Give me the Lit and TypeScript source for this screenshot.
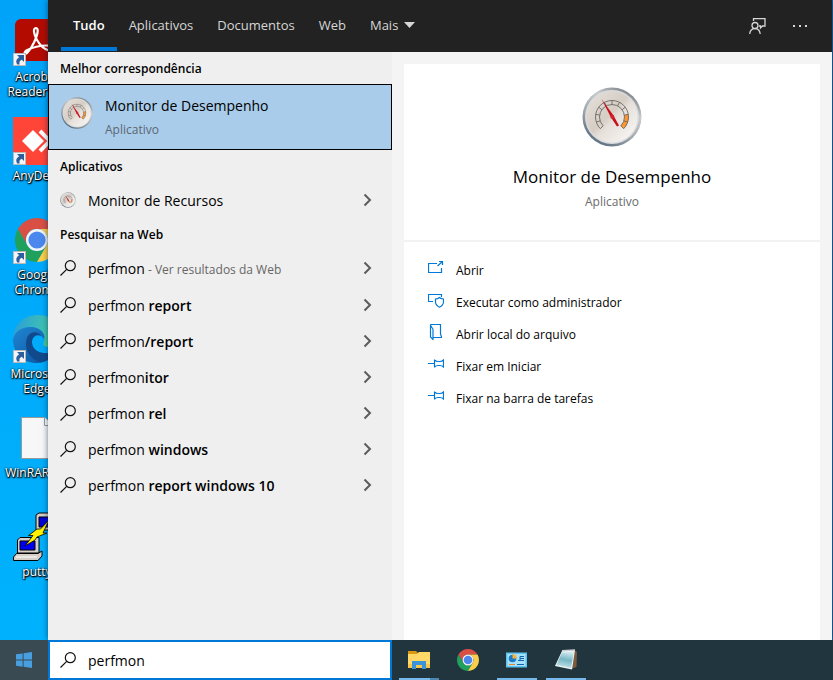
import { LitElement, html, svg, css, nothing, TemplateResult } from "lit";
import { customElement, property, state } from "lit/decorators.js";
import { classMap } from "lit/directives/class-map.js";

const chromeShapes = svg`
  <path fill="#d94f43" d="M24 13H43.05A22 22 0 0 0 4.95 13L14.47 29.5A11 11 0 0 1 24 13Z"/>
  <path fill="#1fa15d" d="M14.47 29.5L4.95 13A22 22 0 0 0 24 46L33.53 29.5A11 11 0 0 1 14.47 29.5Z"/>
  <path fill="#fbce4a" d="M33.53 29.5L24 46A22 22 0 0 0 43.05 13H24A11 11 0 0 1 33.53 29.5Z"/>
  <circle cx="24" cy="24" r="11" fill="#f4f4f4"/>
  <circle cx="24" cy="24" r="8.6" fill="#4a88ee"/>`;

const shortcutArrow = svg`
  <rect x="0.5" y="36.5" width="12" height="12" fill="#f4f4f4" stroke="#b9b9b9"/>
  <path fill="#2c5f9e" d="M4 38H11V45L8.8 42.8C6.8 43.6 6 45 6.6 47.4H4.2C2.4 44.4 3.4 41.8 6.2 40.2Z"/>`;

const desktopArt: Record<string, TemplateResult> = {
  acrobat: svg`
    <rect x="2" y="2" width="44" height="42" rx="6" fill="#b30b00"/>
    <path fill="none" stroke="#fff" stroke-width="2.2" d="M23 11C19.500 11 21 18 24 23C27.500 29 33 33.500 38 33.500C42 33.500 41.500 29 36 28.600C28 28 18 30.500 13.500 33.500C10 36 12 38 14.500 35.500C19 31 24 20 24.600 15C24.900 12.500 24.400 11 23 11Z"/>`,
  anydesk: svg`
    <rect width="48" height="48" y="1" fill="#ff4438"/>
    <path fill="#fff" d="M9 25L20 14L31 25L20 36Z"/>
    <path fill="none" stroke="#fff" stroke-width="4" d="M27 15L37 25L27 35"/>`,
  chrome: svg`<g transform="translate(0 1)">${chromeShapes}</g>`,
  edge: svg`
    <defs>
      <linearGradient id="edge-top" x1="0" x2="1" y1="0.300" y2="0.500">
        <stop offset="0" stop-color="#2a9fd8"/><stop offset="0.700" stop-color="#3fc4b0"/><stop offset="1" stop-color="#5ed66a"/>
      </linearGradient>
      <linearGradient id="edge-low" x1="0" x2="1" y1="0" y2="1">
        <stop offset="0" stop-color="#1f86d2"/><stop offset="1" stop-color="#0c4f9c"/>
      </linearGradient>
    </defs>
    <path fill="url(#edge-top)" d="M0 25C1 9 12 1 25 1C39 1 48 11 48 22C48 29 43 33 37 33C31 33 29 31 31 27C33 20 27 13 18 13C9 13 2 18 0 25Z"/>
    <path fill="url(#edge-low)" d="M0 25C2 17 9 13 18 13C27 13 33 20 31 25C29 20 20 20 19 27C18 36 28 42 42 38C38 45 31 49 24 49C10 49 0 39 0 25Z"/>
    <path fill="#114a8c" d="M14 24C10 36 18 46 28 48.500C36 47 40 43 42 38C28 42 18 36 19 27C20 21 25 20 28 21.500C24 16 16 18 14 24Z"/>`,
  file: svg`
    <path fill="#f7f7f7" stroke="#9a9a9a" d="M8.500 4.500H32L41 13.500V45.500H8.500Z"/>
    <path fill="#fff" stroke="#9a9a9a" d="M31.500 4.500V12.500H40"/>`,
  putty: svg`
    <g stroke="#000">
      <path fill="#d4d0c8" d="M23 3L26 1H48V18H23Z"/>
      <path fill="#0000d8" d="M26 5H46V15H26Z"/>
      <path fill="#d4d0c8" d="M4.500 28L7 25.500H26V41H4.500Z"/>
      <path fill="#0000f0" d="M7 29H22V38H7Z"/>
      <path fill="#d4d0c8" d="M0.500 45L3.500 41.500H25L29 39V44L25 48.500H0.500Z"/>
      <path fill="#fff200" stroke-width="0.800" d="M12 34L20 23.500H15.500L24 17L27.500 17L36 8L30 21H34L24 25L22 28Z"/>
    </g>
    <path stroke="#fff" d="M3 45H24"/>`,
};

const windowsLogo = svg`
  <path fill="#479fe0" d="M0 2.300L6.600 1.400V7.600H0ZM7.600 1.250L16 0V7.600H7.600ZM0 8.500H6.600V14.700L0 13.800ZM7.600 8.500H16V16L7.600 14.850Z"/>`;

const taskArt: Record<string, TemplateResult> = {
  explorer: svg`
    <path fill="#d99a12" d="M1 3H9L11 5V8H1Z"/>
    <path fill="#ffd867" d="M1 6H10L12 4H23V20H1Z"/>
    <path fill="#f9c84a" d="M1 16H23V20H1Z"/>
    <path fill="#3b94d8" d="M5 13H19V21H15V17H9V21H5Z"/>`,
  chrome: svg`<g transform="scale(0.5)">${chromeShapes}</g>`,
  monitor: svg`
    <rect x="1" y="4.500" width="21" height="15" fill="#5cc4f2"/>
    <rect x="2.500" y="6" width="18" height="12" fill="#a8e2fa"/>
    <circle cx="7.500" cy="10.500" r="3.800" fill="#1b7cc8"/>
    <path fill="#f7b23a" d="M7.500 10.500V6A4.500 4.500 0 0 1 12 10.500Z"/>
    <path fill="none" stroke="#1462a8" d="M13 12.500H15V8.500H19M15 10.500H19M15 12.500H19M12 16.500H19"/>
    <path stroke="#e8862a" d="M4 16.500H10"/>`,
  notes: svg`
    <defs>
      <linearGradient id="page" x1="0.600" x2="0.400" y1="0" y2="1">
        <stop offset="0" stop-color="#d5ecef"/><stop offset="0.500" stop-color="#77b6c6"/><stop offset="1" stop-color="#c4e6ea"/>
      </linearGradient>
    </defs>
    <path fill="#7a5b3c" d="M20.500 2L23 4L22.500 19L17 21Z"/>
    <path fill="#f0f4f4" d="M8 3L21 2L18 21.500L1 18Z"/>
    <path fill="url(#page)" d="M8 4.500L20 3.500L17 20L2.500 17Z"/>
    <path fill="none" stroke="#c9cfd0" stroke-width="1.500" d="M8 2.800L21 2"/>`,
};

const actionArt: Record<string, TemplateResult> = {
  open: svg`<path d="M9 3.500H0.500V12.500H13.500V8M9.500 6L14.500 1.500M11 1.500H14.500V5"/>`,
  admin: svg`<path d="M5 9.500H0.500V2.500H13.500V5M11.500 5.500C10.300 6.500 9 7 7.500 7V10C7.500 12.500 9 14 11.500 15.200C14 14 15.500 12.500 15.500 10V7C14 7 12.700 6.500 11.500 5.500Z"/>`,
  folder: svg`<path d="M2.500 0.500H12.500V9.500C12.500 11 13.500 11.500 13.500 13.500H5M2.500 0.500V13L5 15.500V5.500C5 3.500 2.500 3.500 2.500 0.500Z"/>`,
  pin: svg`<path d="M0 7.500H6M6.500 3.500V11.500M6.500 4C7.500 5 8 5.500 10 5.500H12C13.500 5.500 14.500 5 15.500 4V11C14.500 10 13.500 9.500 12 9.500H10C8 9.500 7.500 10 6.500 11"/>`,
};

/* Dial scale: a band from 135 to 405 degrees, split into ten segments. */
const at = (radius: number, degrees: number) => {
  const angle = (degrees * Math.PI) / 180;
  return `${(30 + radius * Math.cos(angle)).toFixed(2)} ${(30 + radius * Math.sin(angle)).toFixed(2)}`;
};
const band = (from: number, to: number) => {
  const large = to - from > 180 ? 1 : 0;
  return `M${at(16.5, from)}A16.5 16.5 0 ${large} 1 ${at(16.5, to)}L${at(12.5, to)}A12.5 12.5 0 ${large} 0 ${at(12.5, from)}Z`;
};
const ticks = Array.from({ length: 9 }, (_, i) => `M${at(12.5, 162 + i * 27)}L${at(16.5, 162 + i * 27)}`).join("");

@customElement("perf-gauge")
class PerfGauge extends LitElement {
  static styles = css`
    :host { display: block; flex: none; }
    svg { display: block; width: 100%; height: 100%; }
  `;
  render() {
    return html`<svg viewBox="0 0 60 60" aria-hidden="true">
      <defs>
        <linearGradient id="rim" x1="0.800" x2="0.200" y1="0" y2="1">
          <stop offset="0" stop-color="#6f7478"/><stop offset="0.300" stop-color="#c9cbcc"/>
          <stop offset="0.600" stop-color="#a5aaae"/><stop offset="1" stop-color="#4f6478"/>
        </linearGradient>
        <linearGradient id="dial" x1="0" x2="1" y1="0" y2="1">
          <stop offset="0" stop-color="#e6e1dc"/><stop offset="0.450" stop-color="#d6cdc4"/><stop offset="0.550" stop-color="#e6e0da"/><stop offset="1" stop-color="#fbfaf9"/>
        </linearGradient>
      </defs>
      <circle cx="30" cy="30" r="29.500" fill="url(#rim)"/>
      <circle cx="30" cy="30" r="27" fill="#d9dcde"/>
      <circle cx="30" cy="30" r="25.500" fill="url(#dial)"/>
      <path fill="#ff962e" d=${band(351, 405)}/>
      <path fill="none" stroke="#6a6764" stroke-width="0.900" d=${band(135, 405) + ticks}/>
      <path fill="#c8101c" d="M19.500 12L31.500 28.500L37 38.500L35 39.500L29 30.500Z"/>
      <circle cx="30.300" cy="29.700" r="2" fill="#d4222c"/>
    </svg>`;
  }
}

@customElement("desktop-icon")
class DesktopIcon extends LitElement {
  @property() art = "";
  @property() label = "";
  @property({ type: Boolean }) shortcut = false;
  static styles = css`
    :host { display: block; height: 99px; }
    a {
      display: flex; flex-direction: column; align-items: center; gap: 3px;
      color: #fff; text-decoration: none; text-align: center; white-space: pre-line;
      font: 12px/15px "Open Sans", "Noto Sans", sans-serif;
      text-shadow: 1px 1px 1px #000, 0 1px 2px #000, 0 0 2px #000;
    }
    svg { display: block; width: 48px; height: 49px; }
  `;
  render() {
    return html`<a href="#">
      <svg viewBox="0 0 48 49" aria-hidden="true">${desktopArt[this.art]}${this.shortcut ? shortcutArrow : nothing}</svg>
      <span>${this.label}</span>
    </a>`;
  }
}

interface Suggestion { typed: string; rest?: string; hint?: string; }

@customElement("app-root")
class AppRoot extends LitElement {
  @state() private tab = "Tudo";
  @state() private query = "perfmon";

  private tabs = ["Tudo", "Aplicativos", "Documentos", "Web"];
  private desktop = [
    { art: "acrobat", label: "Acrobat\nReader DC", shortcut: true },
    { art: "anydesk", label: "AnyDesk", shortcut: true },
    { art: "chrome", label: "Google\nChrome", shortcut: true },
    { art: "edge", label: "Microsoft\nEdge", shortcut: true },
    { art: "file", label: "WinRAR.rar", shortcut: false },
    { art: "putty", label: "putty", shortcut: false },
  ];
  private suggestions: Suggestion[] = [
    { typed: "perfmon", hint: " - Ver resultados da Web" },
    { typed: "perfmon ", rest: "report" },
    { typed: "perfmon", rest: "/report" },
    { typed: "perfmon", rest: "itor" },
    { typed: "perfmon ", rest: "rel" },
    { typed: "perfmon ", rest: "windows" },
    { typed: "perfmon ", rest: "report windows 10" },
  ];
  private actions = [
    { art: "open", label: "Abrir" },
    { art: "admin", label: "Executar como administrador" },
    { art: "folder", label: "Abrir local do arquivo" },
    { art: "pin", label: "Fixar em Iniciar" },
    { art: "pin", label: "Fixar na barra de tarefas" },
  ];
  private tasks = [
    { art: "explorer", label: "Explorador de Arquivos", open: true, stacked: true },
    { art: "chrome", label: "Google Chrome", open: false, stacked: false },
    { art: "monitor", label: "Painel de Controle", open: true, stacked: false },
    { art: "notes", label: "Bloco de Notas", open: true, stacked: false },
  ];

  static styles = css`
    * { box-sizing: border-box; }
    :host {
      display: grid; grid-template-rows: 1fr 40px; min-height: 100vh;
      font: 14px/20px "Open Sans", "Noto Sans", sans-serif; color: #000;
    }
    button { font: inherit; color: inherit; background: none; border: 0; padding: 0; text-align: left; }
    ul { list-style: none; margin: 0; padding: 0; }
    h2, h3, p { margin: 0; font-weight: 400; }
    svg { display: block; flex: none; }

    .screen {
      display: grid; grid-template-columns: 48px 1fr; padding-right: 1px;
      background: linear-gradient(90deg, #00a5f8, #1468a8);
    }
    .desktop { padding-top: 17px; overflow: hidden; background: linear-gradient(#00a3f8, #00b2fd); }
    .desktop-grid { width: 74px; }
    .flyout { display: grid; grid-template-rows: 52px 1fr; box-shadow: 0 0 6px rgba(0, 30, 60, 0.6); background: #f4f4f4; min-width: 0; }

    .tabs { display: flex; justify-content: space-between; background: #222; color: #d6d6d6; font-size: 13px; padding: 0 24px 0 13px; }
    .tab-set { display: flex; }
    .tab { padding: 3px 12px 0; border-bottom: 4px solid transparent; margin-bottom: 1px; }
    .tab.active { color: #fff; font-weight: 600; border-color: #0078d7; }
    .more { display: flex; align-items: center; gap: 6px; }
    .tools { display: flex; align-items: center; gap: 26px; }

    .body { display: grid; grid-template-columns: 344px minmax(0, 1fr); }
    .results { background: #efefef; }
    .group { font-size: 12px; line-height: 18px; font-weight: 600; padding: 8px 0 6px 12px; }
    .best {
      display: flex; align-items: center; gap: 12px; width: 100%; height: 66px; padding: 0 12px;
      background: #a9cceb; border: 1px solid #000;
    }
    .best perf-gauge { width: 32px; height: 32px; margin-bottom: 8px; }
    .best-text { display: grid; gap: 4px; padding-top: 2px; }
    .small { font-size: 12px; color: #5d6670; }
    .row { display: flex; align-items: center; gap: 12px; width: 100%; height: 36px; padding: 0 20px 0 12px; }
    .suggestions { display: grid; gap: 0; }
    .suggestions li:first-child { padding-bottom: 1px; }
    .row perf-gauge { width: 16px; height: 16px; }
    .label { flex: 1; white-space: pre; padding-top: 2px; }
    .label b { font-weight: 600; }
    .hint { font-size: 12px; color: #666; }
    .stroke { fill: none; stroke: #111; stroke-width: 1.200; }
    .chevron { fill: none; stroke: #5c5c5c; stroke-width: 2; }

    .preview { background: #fff; margin: 12px 12px 0; }
    .hero { display: flex; flex-direction: column; align-items: center; height: 178px; padding-top: 23px; border-bottom: 2px solid #f2f2f2; }
    .hero perf-gauge { width: 60px; height: 60px; }
    .title { font-size: 17px; line-height: 24px; margin-top: 18px; }
    .hero .small { margin-top: 3px; color: #6b6b6b; }
    .actions { padding: 12px 24px; }
    .action { display: flex; align-items: center; gap: 12px; width: 100%; height: 32px; font-size: 12px; }
    .action span { padding-top: 2px; }
    .action svg { fill: none; stroke: #0078d7; stroke-width: 1.200; margin-bottom: 4px; }

    .taskbar { display: flex; background: #21353f; }
    .start { width: 48px; display: grid; place-items: center; background: #394a53; }
    .search { display: flex; align-items: center; gap: 12px; width: 344px; padding: 0 10px; background: #fff; border: 2px solid #0078d7; }
    .search input { flex: 1; min-width: 0; border: 0; outline: 0; padding: 2px 0 0; font: inherit; background: none; }
    .apps { display: flex; gap: 9px; padding-left: 7px; }
    .app { width: 40px; display: grid; place-items: center; border-bottom: 2px solid transparent; border-top: 2px solid transparent; }
    .app.open { border-bottom-color: #76b9ed; }
    .app.stacked { border-image: linear-gradient(90deg, #76b9ed 78%, #4d86ae 78%) 0 0 2 0; }
  `;

  private magnifier() {
    return html`<svg class="stroke" width="16" height="16" viewBox="0 0 16 16" aria-hidden="true">
      <circle cx="10.300" cy="5.700" r="5"/><path d="M6.700 9.300L0.500 15.500"/></svg>`;
  }

  private chevron() {
    return html`<svg class="chevron" width="9" height="14" viewBox="0 0 9 14" aria-hidden="true"><path d="M1.500 1.500L7 7L1.500 12.500"/></svg>`;
  }

  render() {
    return html`
      <div class="screen">
        <div class="desktop"><div class="desktop-grid">
          ${this.desktop.map((d) => html`<desktop-icon art=${d.art} label=${d.label} ?shortcut=${d.shortcut}></desktop-icon>`)}
        </div></div>
        <main class="flyout">
          <nav class="tabs">
            <div class="tab-set">
              ${this.tabs.map((t) => html`<button class=${classMap({ tab: true, active: t === this.tab })} @click=${() => (this.tab = t)}>${t}</button>`)}
              <button class="tab more">Mais <svg width="11" height="6" viewBox="0 0 11 6" aria-hidden="true"><path fill="#d6d6d6" d="M0 0H11L5.500 6Z"/></svg></button>
            </div>
            <div class="tools">
              <button aria-label="Comentários"><svg width="17" height="17" viewBox="0 0 17 17" fill="none" stroke="#d6d6d6" stroke-width="1.300" aria-hidden="true">
                <circle cx="6" cy="7.500" r="3"/><path d="M0.700 16C1 12.500 3 10.700 6 10.700S10.800 12.500 11.200 16M4.500 3V0.700H16V8H13.500L11.500 10V8H10"/></svg></button>
              <button aria-label="Opções"><svg width="16" height="16" viewBox="0 0 16 16" fill="#d6d6d6" aria-hidden="true">
                <path d="M1 7h2v2H1ZM7 7h2v2H7ZM13 7h2v2h-2Z"/></svg></button>
            </div>
          </nav>
          <div class="body">
            <section class="results">
              <h3 class="group">Melhor correspondência</h3>
              <button class="best">
                <perf-gauge></perf-gauge>
                <span class="best-text"><span>Monitor de Desempenho</span><span class="small">Aplicativo</span></span>
              </button>
              <h3 class="group">Aplicativos</h3>
              <button class="row"><perf-gauge></perf-gauge><span class="label">Monitor de Recursos</span>${this.chevron()}</button>
              <h3 class="group">Pesquisar na Web</h3>
              <ul class="suggestions">
                ${this.suggestions.map((s) => html`<li><button class="row">${this.magnifier()}<span class="label">${s.typed}${s.rest ? html`<b>${s.rest}</b>` : nothing}${s.hint ? html`<span class="hint">${s.hint}</span>` : nothing}</span>${this.chevron()}</button></li>`)}
              </ul>
            </section>
            <section class="preview">
              <div class="hero">
                <perf-gauge></perf-gauge>
                <h2 class="title">Monitor de Desempenho</h2>
                <p class="small">Aplicativo</p>
              </div>
              <ul class="actions">
                ${this.actions.map((a) => html`<li><button class="action"><svg width="16" height="16" viewBox="0 0 16 16" aria-hidden="true">${actionArt[a.art]}</svg><span>${a.label}</span></button></li>`)}
              </ul>
            </section>
          </div>
        </main>
      </div>
      <footer class="taskbar">
        <button class="start" aria-label="Iniciar"><svg width="16" height="16" viewBox="0 0 16 16" aria-hidden="true">${windowsLogo}</svg></button>
        <label class="search">${this.magnifier()}
          <input type="text" aria-label="Pesquisar" .value=${this.query} @input=${(e: Event) => (this.query = (e.target as HTMLInputElement).value)}>
        </label>
        <div class="apps">
          ${this.tasks.map((t) => html`<button class=${classMap({ app: true, open: t.open, stacked: t.stacked })} aria-label=${t.label}>
            <svg width="24" height="24" viewBox="0 0 24 24" aria-hidden="true">${taskArt[t.art]}</svg></button>`)}
        </div>
      </footer>`;
  }
}
